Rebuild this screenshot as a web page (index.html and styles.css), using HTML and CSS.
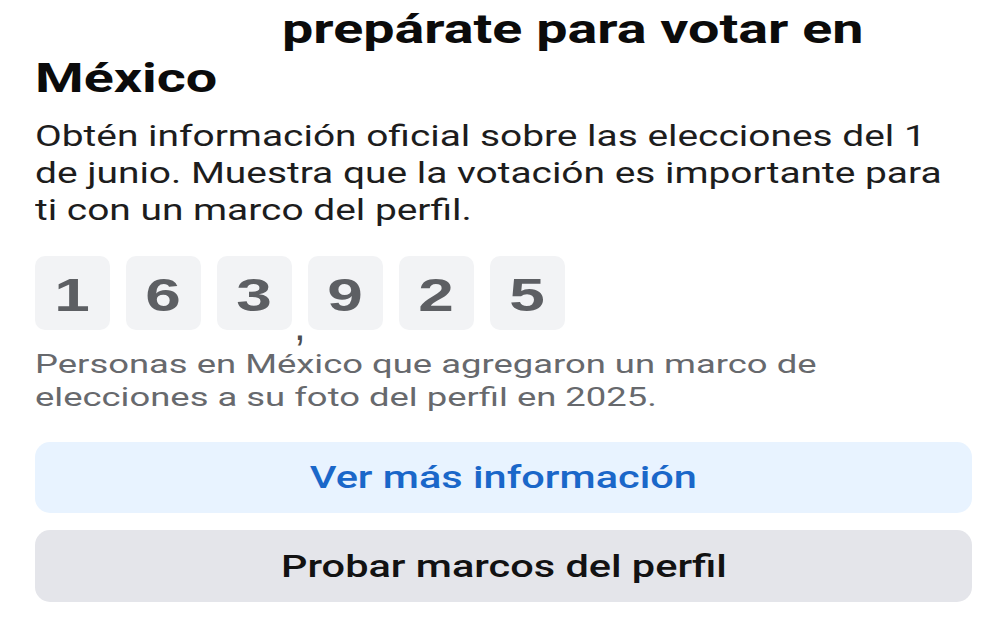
FILE: index.html
```html
<!DOCTYPE html>
<html lang="es">
<head>
<meta charset="utf-8">
<link rel="stylesheet" href="styles.css">
</head>
<body>
<main class="card">
  <h1 class="title"><span class="wide">prepárate para votar en México</span></h1>
  <p class="lead"><span class="wide">Obtén información oficial sobre las elecciones del 1 de junio. Muestra que la votación es importante para ti con un marco del perfil.</span></p>
  <div class="counter">
    <span class="digit"><span class="num">1</span></span>
    <span class="digit"><span class="num">6</span></span>
    <span class="digit sep"><span class="num">3</span></span>
    <span class="digit"><span class="num">9</span></span>
    <span class="digit"><span class="num">2</span></span>
    <span class="digit"><span class="num">5</span></span>
  </div>
  <p class="caption"><span class="wide">Personas en México que agregaron un marco de elecciones a su foto del perfil en 2025.</span></p>
  <div class="actions">
    <button class="btn btn-primary"><span class="label">Ver más información</span></button>
    <button class="btn btn-secondary"><span class="label">Probar marcos del perfil</span></button>
  </div>
</main>
</body>
</html>
```
FILE: styles.css
```css
* { box-sizing: border-box; }
html, body { margin: 0; padding: 0; background: #ffffff; }
body {
  width: 1006px;
  height: 620px;
  overflow: hidden;
  font-family: Roboto, "Liberation Sans", sans-serif;
}
.card { padding: 0 34px 0 35px; }

/* text in the capture is stretched horizontally */
.wide {
  display: block;
  transform-origin: 0 0;
  transform: scaleX(var(--sx));
  width: var(--w);
}

.title {
  margin: 0;
  padding-top: 5px;
  font-size: 41px;
  line-height: 49px;
  font-weight: 700;
  color: #0b0b0b;
}
.title .wide { --sx: 1.357; --w: 690px; text-indent: 182px; }

.lead {
  margin: 15px 0 0 0;
  font-size: 29.5px;
  line-height: 37px;
  color: #1d1d1d;
}
.lead .wide { --sx: 1.318; --w: 698px; }

.counter {
  display: flex;
  gap: 16px;
  margin-top: 27px;
}
.digit {
  position: relative;
  width: 75px;
  height: 74px;
  border-radius: 10px;
  background: #f2f3f5;
  display: flex;
  align-items: center;
  justify-content: center;
}
.num {
  display: block;
  transform: scaleX(1.36);
  font-family: "Liberation Sans", Arial, sans-serif;
  font-weight: 700;
  font-size: 47px;
  line-height: 1;
  color: #5d5f63;
  margin-top: 2px;
}
.digit.sep::after {
  content: ",";
  position: absolute;
  left: calc(100% + 2px);
  top: calc(100% - 25px);
  font-family: "Liberation Sans", Arial, sans-serif;
  font-size: 42px;
  line-height: 1;
  color: #4b4c50;
}

.caption {
  margin: 18px 0 0 0;
  font-size: 25.5px;
  line-height: 32.5px;
  color: #67696d;
}
.caption .wide { --sx: 1.428; --w: 601px; }

.actions {
  display: flex;
  flex-direction: column;
  gap: 17px;
  margin-top: 29px;
}
.btn {
  height: 71px;
  border: none;
  border-radius: 15px;
  display: flex;
  align-items: center;
  justify-content: center;
  padding: 0;
  font-family: Roboto, "Liberation Sans", sans-serif;
  font-size: 30.5px;
  font-weight: 500;
  cursor: pointer;
}
.btn .label { display: block; transform: scaleX(1.36); }
.btn-primary { background: #e8f3ff; color: #1a67c9; }
.btn-secondary { background: #e4e5ea; color: #121212; height: 72px; }
```
